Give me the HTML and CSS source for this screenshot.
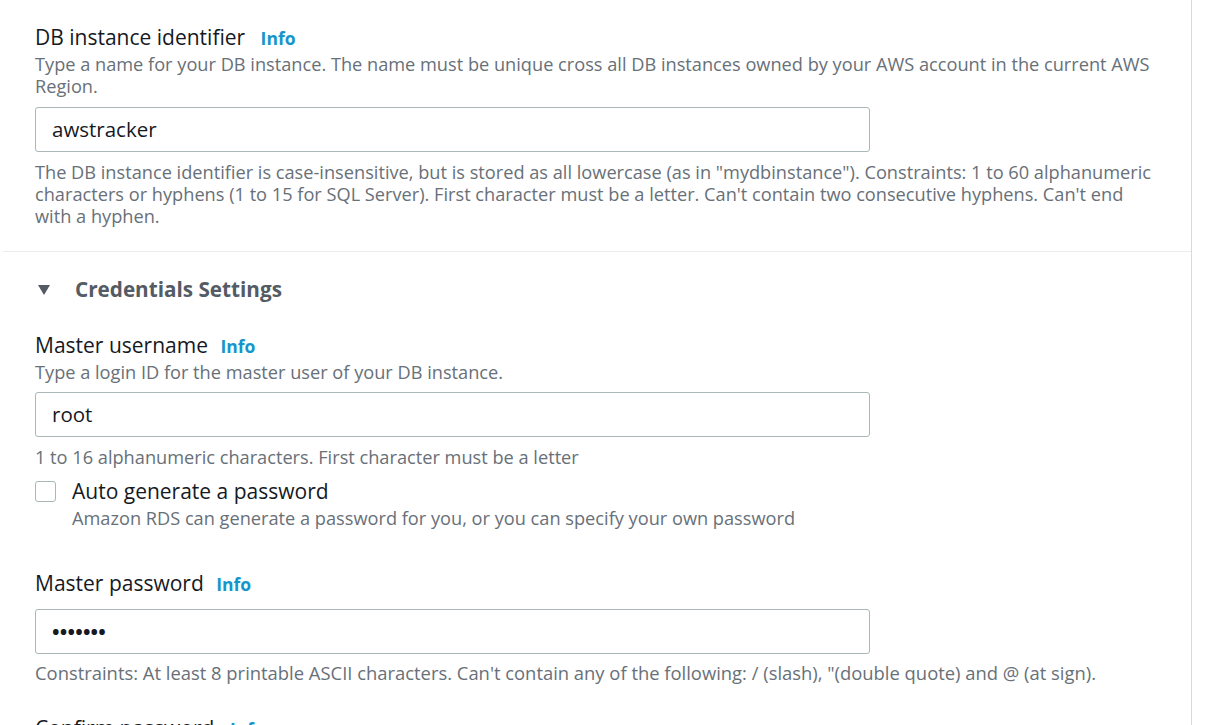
FILE: index.html
```html
<!DOCTYPE html>
<html>
<head>
<meta charset="utf-8">
<link rel="stylesheet" href="styles.css">
</head>
<body>
<div class="panel">
  <section class="block first">
    <div class="field">
      <div class="label">DB instance identifier <span class="info">Info</span></div>
      <div class="desc">Type a name for your DB instance. The name must be unique cross all DB instances owned by your AWS account in the current AWS Region.</div>
      <div class="input">awstracker</div>
      <div class="hint">The DB instance identifier is case-insensitive, but is stored as all lowercase (as in "mydbinstance"). Constraints: 1 to 60 alphanumeric characters or hyphens (1 to 15 for SQL Server). First character must be a letter. Can't contain two consecutive hyphens. Can't end with a hyphen.</div>
    </div>
  </section>
  <section class="block second">
    <div class="expander"><span class="caret"></span>Credentials Settings</div>
    <div class="field user">
      <div class="label">Master username <span class="info">Info</span></div>
      <div class="desc">Type a login ID for the master user of your DB instance.</div>
      <div class="input">root</div>
      <div class="hint">1 to 16 alphanumeric characters. First character must be a letter</div>
    </div>
    <div class="check">
      <span class="box"></span>
      <div class="check-text">
        <div class="check-label">Auto generate a password</div>
        <div class="check-desc">Amazon RDS can generate a password for you, or you can specify your own password</div>
      </div>
    </div>
    <div class="field pw">
      <div class="label">Master password <span class="info">Info</span></div>
      <div class="input dots">•••••••</div>
      <div class="hint">Constraints: At least 8 printable ASCII characters. Can't contain any of the following: / (slash), "(double quote) and @ (at sign).</div>
    </div>
    <div class="field confirm">
      <div class="label">Confirm password <span class="info">Info</span></div>
    </div>
  </section>
</div>
</body>
</html>
```

FILE: styles.css
```css
html, body {
  margin: 0;
  padding: 0;
  background: #ffffff;
  overflow: hidden;
  height: 725px;
}
body {
  font-family: "Open Sans", "Noto Sans", sans-serif;
  color: #16191f;
}
.panel {
  width: 1192px;
  border-right: 1px solid #d5dbdb;
  height: 725px;
  box-sizing: border-box;
}
.block.first {
  padding: 24px 0 24px 32px;
  margin-left: 3px;
  border-bottom: 1px solid #eaeded;
}
.block.second {
  padding: 24px 0 0 35px;
}
.label {
  font-size: 21px;
  line-height: 26px;
  color: #16191f;
}
.label .info {
  margin-left: 10px;
}
.info {
  font-size: 17.5px;
  font-weight: 700;
  color: #1496ca;
}
.desc, .hint, .check-desc {
  font-size: 18.2px;
  line-height: 22px;
  color: #687078;
}
.desc {
  margin-top: 2px;
  padding-right: 30px;
}
.input {
  width: 835px;
  height: 45px;
  box-sizing: border-box;
  border: 1px solid #aab7b8;
  border-radius: 3px;
  margin-top: 10px;
  padding: 0 16px;
  font-size: 20.5px;
  line-height: 43px;
  color: #16191f;
}
.input.dots {
  font-size: 20px;
  font-weight: 700;
  letter-spacing: 0.2px;
}
.hint {
  margin-top: 9px;
  padding-right: 30px;
}
.expander {
  display: flex;
  align-items: center;
  font-size: 20.7px;
  font-weight: 700;
  color: #545b64;
  line-height: 26px;
}
.caret {
  width: 0;
  height: 0;
  border-left: 6px solid transparent;
  border-right: 6px solid transparent;
  border-top: 10px solid #545b64;
  margin: 1px 25px 0 3px;
}
.field.user {
  margin-top: 30px;
}
.field.user .input {
  margin-top: 9px;
}
.field.user .label .info {
  margin-left: 7px;
}
.check {
  display: flex;
  margin-top: 11px;
}
.box {
  width: 21px;
  height: 21px;
  border: 1px solid #aab7b8;
  border-radius: 3px;
  box-sizing: border-box;
  margin-top: 2px;
  flex: none;
}
.check-text {
  margin-left: 16px;
}
.check-label {
  font-size: 21px;
  line-height: 24px;
}
.check-desc {
  margin-top: 4px;
}
.field.pw {
  margin-top: 41px;
}
.field.pw .label .info {
  margin-left: 7px;
}
.field.pw .input {
  margin-top: 12px;
}
.field.pw .hint {
  margin-top: 8px;
  font-size: 18.4px;
}
.field.confirm {
  margin-top: 31px;
}
```
